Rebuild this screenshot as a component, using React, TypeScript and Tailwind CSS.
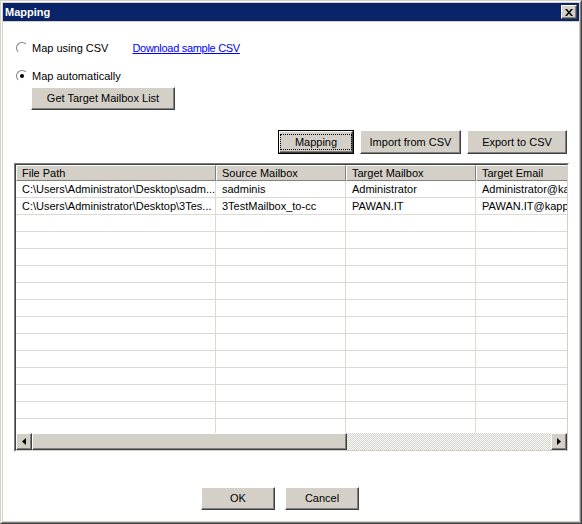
import React from 'react';

const font = { fontFamily: '"Liberation Sans", Arial, sans-serif' };

const rows = [
  ['C:\\Users\\Administrator\\Desktop\\sadm...', 'sadminis', 'Administrator', 'Administrator@kapp'],
  ['C:\\Users\\Administrator\\Desktop\\3Tes...', '3TestMailbox_to-cc', 'PAWAN.IT', 'PAWAN.IT@kapp'],
];

const cols = ['w-[200px]', 'w-[130px]', 'w-[130px]', 'w-[100px]'];
const headers = ['File Path', 'Source Mailbox', 'Target Mailbox', 'Target Email'];

const btn =
  'flex items-center justify-center bg-[#d4d0c8] border border-t-white border-l-white border-r-[#404040] border-b-[#404040] shadow-[inset_-1px_-1px_#808080] text-[11px] text-black';

const Radio = ({ checked }: { checked?: boolean }) => (
  <span className="relative w-[12px] h-[12px] rounded-full border border-t-[#808080] border-l-[#808080] border-r-white border-b-white bg-white flex items-center justify-center">
    {checked && <span className="w-[4px] h-[4px] rounded-full bg-black" />}
  </span>
);

const App = () => {
  return (
    <div className="w-[582px] h-[524px] bg-[#d4d0c8] border border-t-[#d4d0c8] border-l-[#d4d0c8] border-r-[#404040] border-b-[#404040] overflow-hidden" style={font}>
      <div className="w-full h-full border border-t-white border-l-white border-r-[#808080] border-b-[#808080] p-px flex flex-col">
        {/* Title bar */}
        <div className="h-[18px] bg-[#0a246a] flex items-center justify-between pl-[2px] pr-[2px]">
          <span className="text-white font-bold text-[11px]">Mapping</span>
          <span className={`${btn} w-[16px] h-[14px]`}>
            <svg width="8" height="7" viewBox="0 0 8 7">
              <path d="M0 0h2l2 2.5L6 0h2L5 3.5 8 7H6L4 4.5 2 7H0l3-3.5z" fill="black" />
            </svg>
          </span>
        </div>

        {/* Body */}
        <div className="flex-1 bg-white mt-px flex flex-col text-[11px] text-black">
          <div className="mt-[20px] ml-[13px] flex items-center h-[12px]">
            <Radio />
            <span className="ml-[4px]">Map using CSV</span>
            <span className="ml-[24px] text-[#0000ff] underline tracking-[-0.3px]">Download sample CSV</span>
          </div>
          <div className="mt-[16px] ml-[13px] flex items-center h-[12px]">
            <Radio checked />
            <span className="ml-[4px]">Map automatically</span>
          </div>
          <div className="mt-[5px] ml-[28px]">
            <div className={`${btn} w-[144px] h-[23px]`}>Get Target Mailbox List</div>
          </div>

          <div className="mt-[20px] ml-[275px] flex gap-[6px]">
            <div className="w-[76px] h-[24px] border border-black">
              <div className={`${btn} w-full h-full`}>
                <span className="border border-dotted border-black px-[14px] leading-[14px]">Mapping</span>
              </div>
            </div>
            <div className={`${btn} w-[101px] h-[24px]`}>Import from CSV</div>
            <div className={`${btn} w-[100px] h-[24px]`}>Export to CSV</div>
          </div>

          {/* Table */}
          <div className="mt-[9px] ml-[11px] w-[555px] h-[289px] border border-t-[#808080] border-l-[#808080] border-r-white border-b-white">
            <div className="w-full h-full border border-t-[#404040] border-l-[#404040] border-r-[#d4d0c8] border-b-[#d4d0c8] flex flex-col overflow-hidden bg-white">
              <div className="flex h-[16px] shrink-0">
                {headers.map((h, i) => (
                  <div
                    key={h}
                    className={`${cols[i]} shrink-0 bg-[#d4d0c8] border border-t-white border-l-white border-r-[#808080] border-b-[#808080] pl-[5px] leading-[14px]`}
                  >
                    {h}
                  </div>
                ))}
              </div>
              <div className="flex-1 overflow-hidden">
                {Array.from({ length: 15 }).map((_, r) => (
                  <div key={r} className="flex h-[17px] border-b border-[#dcdad5]">
                    {cols.map((c, i) => (
                      <div key={i} className={`${c} shrink-0 border-r border-[#dcdad5] pl-[6px] leading-[16px] whitespace-nowrap overflow-hidden`}>
                        {rows[r]?.[i] ?? ''}
                      </div>
                    ))}
                  </div>
                ))}
              </div>
              {/* Horizontal scrollbar */}
              <div className="flex h-[17px] shrink-0">
                <div className={`${btn} w-[16px] h-[17px]`}>
                  <svg width="4" height="7" viewBox="0 0 4 7">
                    <path d="M4 0v7L0 3.5z" fill="black" />
                  </svg>
                </div>
                <div className={`${btn} w-[315px] h-[17px]`} />
                <div className="flex-1 bg-[repeating-conic-gradient(#d4d0c8_0%_25%,#ffffff_0%_50%)] bg-[length:2px_2px]" />
                <div className={`${btn} w-[16px] h-[17px]`}>
                  <svg width="4" height="7" viewBox="0 0 4 7">
                    <path d="M0 0v7l4-3.5z" fill="black" />
                  </svg>
                </div>
              </div>
            </div>
          </div>

          <div className="mt-[35px] ml-[198px] flex gap-[10px]">
            <div className={`${btn} w-[74px] h-[23px]`}>OK</div>
            <div className={`${btn} w-[74px] h-[23px]`}>Cancel</div>
          </div>
        </div>
      </div>
    </div>
  );
};

export default App;
